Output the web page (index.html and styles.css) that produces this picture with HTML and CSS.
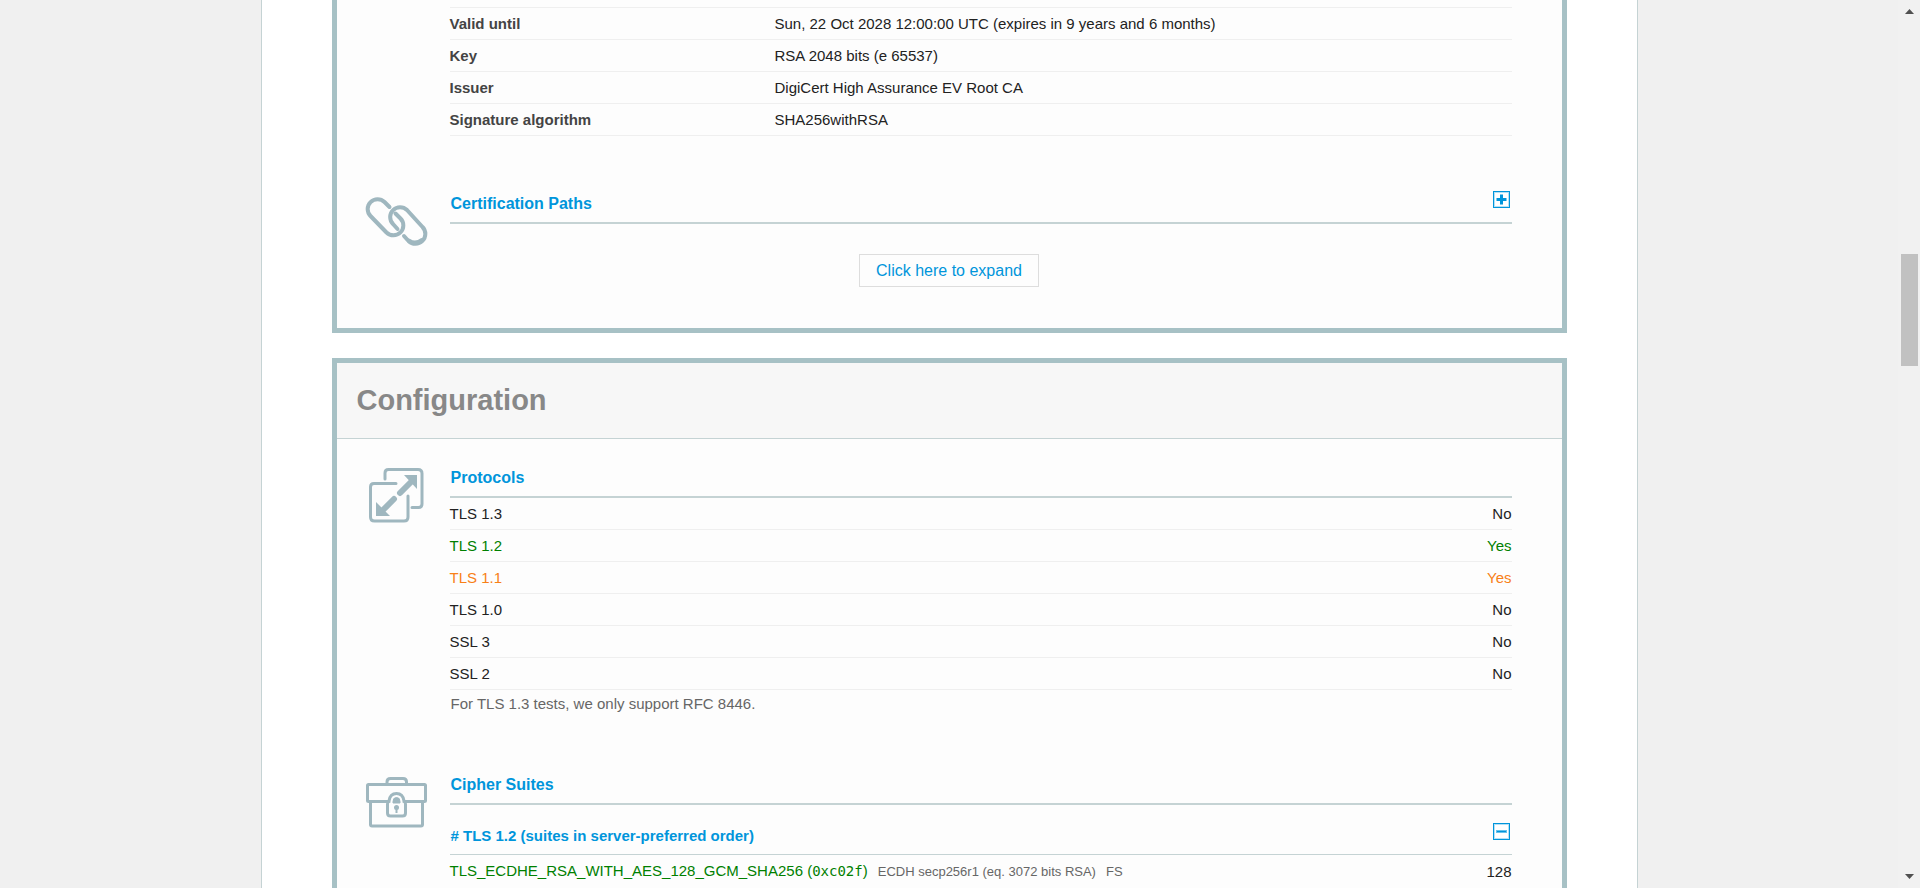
FILE: index.html
```html
<!DOCTYPE html>
<html lang="en">
<head>
<meta charset="utf-8">
<title>SSL Server Test</title>
<link rel="stylesheet" href="styles.css">
</head>
<body>
<div class="viewport">
<main class="sheet">
  <section class="panel panel-certificate">
    <div class="section">
      <table class="details">
        <tbody>
          <tr><th scope="row">Valid until</th><td>Sun, 22 Oct 2028 12:00:00 UTC (expires in 9 years and 6 months)</td></tr>
          <tr><th scope="row">Key</th><td>RSA 2048 bits (e 65537)</td></tr>
          <tr><th scope="row">Issuer</th><td>DigiCert High Assurance EV Root CA</td></tr>
          <tr><th scope="row">Signature algorithm</th><td>SHA256withRSA</td></tr>
        </tbody>
      </table>
    </div>
    <div class="section section-next">
      <svg class="section-icon" viewBox="0 0 64 58" aria-hidden="true">
        <g fill="none" stroke="#9fb7bf" stroke-width="4" stroke-linecap="round" stroke-linejoin="round">
          <path d="M24.500 15L19.500 10A9.900 9.900 0 0 0 5.500 24L21.500 40.500A9.900 9.900 0 0 0 35.500 26.500L30.500 21.500"/>
          <path d="M32.500 37L28 32A9.900 9.900 0 0 1 42 18L57.500 35A9.900 9.900 0 0 1 43.500 49L39 44"/>
          <path d="M44 48.500Q50 53 57 48"/>
        </g>
      </svg>
      <div class="section-head">
        <h3>Certification Paths</h3>
        <button class="toggle" type="button" aria-label="Expand certification paths">
          <svg viewBox="0 0 17 17" aria-hidden="true"><rect x=".5" y=".5" width="16" height="16" fill="#fff" stroke="#0095db"/><rect x="1.500" y="1.500" width="14" height="14" fill="none" stroke="#b5e0f5"/><path d="M8.500 3.500v10M3.500 8.500h10" stroke="#0095db" stroke-width="3"/></svg>
        </button>
      </div>
    </div>
    <div class="expand-row"><button class="expand" type="button">Click here to expand</button></div>
  </section>

  <section class="panel">
    <h2 class="panel-title">Configuration</h2>
    <div class="section section-first">
      <svg class="section-icon" viewBox="0 0 64 58" aria-hidden="true">
        <g fill="none" stroke="#9fb7bf" stroke-width="3" stroke-linecap="round" stroke-linejoin="round">
          <path d="M20 13V7q0-3.500 3.500-3.500H53q4 0 4 4V38q0 3.500-3.500 3.500H47"/>
          <path d="M31 17.500H9q-3.500 0-3.500 3.500V51q0 4 4 4H39q4 0 4-4V30"/>
        </g>
        <path d="M35 27L48 14M18 44L29 33" stroke="#9fb7bf" stroke-width="6" stroke-linecap="round"/>
        <path d="M39 9H52V23ZM11 36V50H25Z" fill="#9fb7bf"/>
      </svg>
      <div class="section-head"><h3>Protocols</h3></div>
      <table class="listing">
        <tbody>
          <tr><td>TLS 1.3</td><td class="value">No</td></tr>
          <tr class="good"><td>TLS 1.2</td><td class="value">Yes</td></tr>
          <tr class="warn"><td>TLS 1.1</td><td class="value">Yes</td></tr>
          <tr><td>TLS 1.0</td><td class="value">No</td></tr>
          <tr><td>SSL 3</td><td class="value">No</td></tr>
          <tr><td>SSL 2</td><td class="value">No</td></tr>
        </tbody>
      </table>
      <p class="note">For TLS 1.3 tests, we only support RFC 8446.</p>
    </div>
    <div class="section section-next">
      <svg class="section-icon" viewBox="0 0 64 58" aria-hidden="true">
        <g fill="none" stroke="#9fb7bf" stroke-width="3" stroke-linejoin="round">
          <path d="M22 11V9q0-3.500 3.500-3.500H38q3.500 0 3.500 3.500V11"/>
          <rect x="2.500" y="11.500" width="58" height="17" rx="1"/>
          <path d="M5.500 28.500V51.500q0 1.500 1.500 1.500H56q1.500 0 1.500-1.500V28.500"/>
        </g>
        <path d="M22.500 31q0-2 1.500-2.500V28q1-7.500 7.500-7.500t7.500 7.500v.5q1.500.5 1.500 2.500V40q0 3-3 3H25.500q-3 0-3-3z" fill="#fdfdfd" stroke="#9fb7bf" stroke-width="3"/>
        <path d="M28 30V28.500q0-4 3.500-4t3.500 4V30z" fill="#9fb7bf" stroke="#9fb7bf"/>
        <circle cx="31.500" cy="34.500" r="2.500" fill="#9fb7bf"/>
        <path d="M30.500 35h2v5h-2z" fill="#9fb7bf"/>
      </svg>
      <div class="section-head"><h3>Cipher Suites</h3></div>
      <div class="suite-head">
        <h4># TLS 1.2 (suites in server-preferred order)</h4>
        <button class="toggle" type="button" aria-label="Collapse TLS 1.2 suites">
          <svg viewBox="0 0 17 17" aria-hidden="true"><rect x=".5" y=".5" width="16" height="16" fill="#fff" stroke="#0095db"/><rect x="1.500" y="1.500" width="14" height="14" fill="none" stroke="#b5e0f5"/><path d="M3 8.500h11" stroke="#66c2ec" stroke-width="3"/><path d="M4 8.500h9" stroke="#0095db"/></svg>
        </button>
      </div>
      <table class="listing suites">
        <tbody>
          <tr><td><span class="suite">TLS_ECDHE_RSA_WITH_AES_128_GCM_SHA256 (<code>0xc02f</code>)</span><span class="extra">ECDH secp256r1 (eq. 3072 bits RSA)</span><span class="extra">FS</span></td><td class="value">128</td></tr>
        </tbody>
      </table>
    </div>
  </section>
</main>
<div class="scrollbar" aria-hidden="true">
  <svg class="arrow" viewBox="0 0 9 5"><path d="M0 5L4.500 0L9 5z" fill="#505050"/></svg>
  <div class="track"><div class="thumb"></div></div>
  <svg class="arrow" viewBox="0 0 9 5"><path d="M0 0L4.500 5L9 0z" fill="#505050"/></svg>
</div>
</div>
</body>
</html>
```

FILE: styles.css
```css
* {
  box-sizing: border-box;
}

body {
  margin: 0;
  background: #f0f0f0;
  color: #222;
  font: 15px/31px "Liberation Sans", Arial, sans-serif;
}

h2,
h3,
h4,
p {
  margin: 0;
}

button {
  margin: 0;
  padding: 0;
  cursor: pointer;
}

.viewport {
  display: flex;
  height: 100vh;
  overflow: hidden;
}

.sheet {
  flex: 0 1 1377px;
  min-height: 100%;
  height: max-content;
  margin: 0 auto;
  padding: 0 70px;
  border: solid #c5d3d4;
  border-width: 0 1px;
  background: #fff;
}

.panel {
  border: 5px solid #a7c1c5;
  background: #fdfdfd;
}

.panel + .panel {
  margin-top: 25px;
}

.panel-certificate {
  padding-top: 7px;
  border-top: 0;
}

.panel-title {
  padding: 0 20px;
  border-bottom: 1px solid #c5d3d4;
  background: #f7f7f7;
  color: #888;
  font-size: 29px;
  line-height: 75px;
}

.section {
  display: grid;
  grid-template-columns: 113px minmax(0, 1fr);
  padding-right: 50px;
}

.section > * {
  grid-column: 2;
}

.section-first {
  margin-top: 21px;
}

.section-next {
  margin-top: 50px;
}

/* The icon hangs below its heading without making the heading row taller. */
.section > .section-icon {
  grid-column: 1;
  grid-row: 1;
  width: 64px;
  height: 58px;
  margin: 6px 0 -26px 28px;
}

.section-head,
.suite-head {
  display: flex;
  justify-content: space-between;
  color: #0095db;
}

.section-head {
  height: 38px;
  padding-left: 1px;
  border-bottom: 2px solid #c5d3d4;
}

h3 {
  font-size: 16px;
  line-height: 36px;
}

.suite-head {
  padding: 13px 0 0 1px;
  border-bottom: 1px solid #c5d3d4;
}

h4 {
  font-size: 15px;
  line-height: 36px;
}

.toggle {
  width: 17px;
  height: 17px;
  margin: 5px 2px 0 0;
  border: 0;
  background: none;
}

.toggle svg {
  display: block;
}

table {
  width: 100%;
  border-collapse: separate;
  border-spacing: 0;
}

th,
td {
  padding: 0;
  border-bottom: 1px solid #efefef;
  text-align: left;
}

.details {
  border-top: 1px solid #efefef;
}

.details th {
  width: 325px;
  color: #444;
}

.listing .value {
  text-align: right;
}

.suites td {
  padding-bottom: 3px;
}

.good,
.suite {
  color: #008000;
}

.warn {
  color: #f88017;
}

.suite code {
  font: 14px/14px "DejaVu Sans Mono", monospace;
}

.extra {
  margin-left: 10px;
  color: #666;
  font-size: 13px;
}

.note {
  padding-left: 1px;
  color: #666;
  line-height: 27px;
}

.expand-row {
  display: flex;
  justify-content: center;
  padding: 30px 0 41px;
}

.expand {
  padding: 0 16px;
  border: 1px solid #ddd;
  background: #fdfdfd;
  color: #0095db;
  font: 16px/31px "Liberation Sans", Arial, sans-serif;
}

.scrollbar {
  display: flex;
  flex: 0 0 22px;
  flex-direction: column;
  align-items: center;
  padding: 9px 2px 9px 3px;
  background: #f1f1f1;
}

.arrow {
  width: 9px;
  height: 5px;
}

.track {
  flex: 1;
  width: 17px;
  padding-top: 240px;
}

.thumb {
  height: 112px;
  background: #c1c1c1;
}
```
